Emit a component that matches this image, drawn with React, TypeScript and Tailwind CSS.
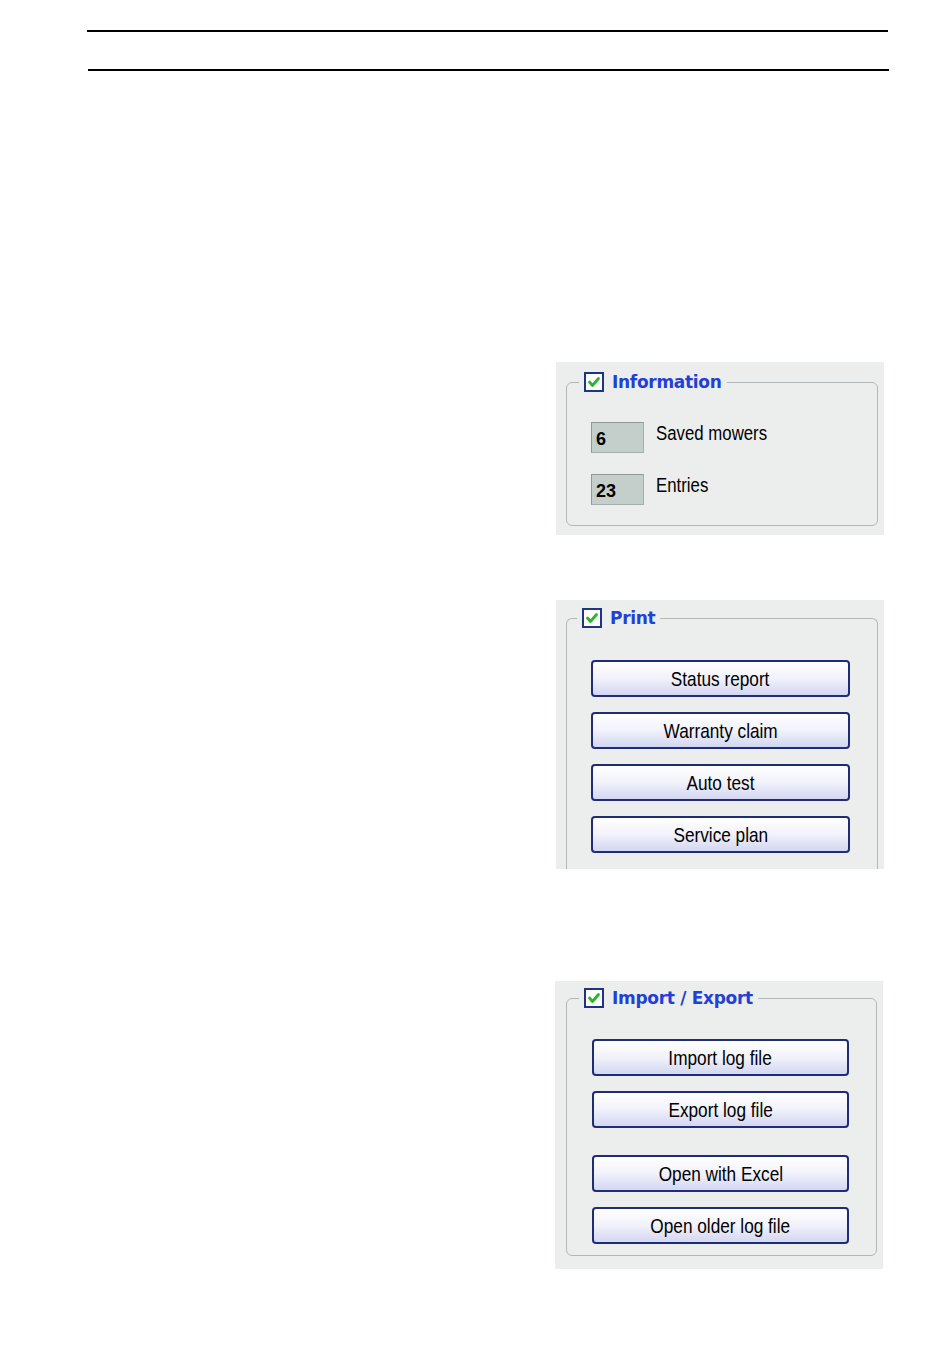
import React from "react";

const sans = { fontFamily: '"Liberation Sans", Arial, sans-serif' };
const head = { fontFamily: '"DejaVu Sans", Verdana, sans-serif' };

function CheckBox() {
  return (
    <span className="w-[20px] h-[20px] border-2 border-[#1f3486] bg-white flex items-center justify-center shrink-0">
      <svg width="14" height="14" viewBox="0 0 14 14">
        <path d="M2.5 7 L5.5 10.5 L11.5 3.5" fill="none" stroke="#2cb52c" strokeWidth="2.8" strokeLinecap="round" strokeLinejoin="round" />
      </svg>
    </span>
  );
}

function Legend({ title, className = "ml-[12px]" }: { title: string; className?: string }) {
  return (
    <legend className={`px-[5px] ${className}`}>
      <span className="flex items-center gap-[8px]">
        <CheckBox />
        <span className="text-[17px] font-bold text-[#2340d6] tracking-[-0.3px] leading-[20px]" style={head}>
          {title}
        </span>
      </span>
    </legend>
  );
}

function WinButton({ label, className = "w-[259px]" }: { label: string; className?: string }) {
  return (
    <button
      className={`h-[37px] border-2 border-[#1f2c78] rounded-[4px] bg-gradient-to-b from-white via-[#f1f2fb] to-[#d3d7f1] text-black flex items-center justify-center ${className}`}
      style={sans}
    >
      <span className="text-[21px] leading-[24px] scale-x-[0.82] whitespace-nowrap">{label}</span>
    </button>
  );
}

function Stat({ value, label }: { value: string; label: string }) {
  return (
    <div className="flex items-start gap-[12px]">
      <div
        className="w-[53px] h-[31px] bg-[#c4cecb] border border-[#a3adab] border-t-[#8f9997] border-l-[#8f9997] pl-[4px] pt-[5px] text-[18px] font-bold text-black leading-[22px]"
        style={sans}
      >
        {value}
      </div>
      <span
        className="text-[20px] text-black leading-[22px] scale-x-[0.84] origin-left whitespace-nowrap"
        style={sans}
      >
        {label}
      </span>
    </div>
  );
}

export default function App() {
  return (
    <div className="w-[950px] h-[1370px] bg-white pt-[30px]">
      <div className="ml-[87px] w-[801px] h-[2px] bg-black" />
      <div className="ml-[88px] mt-[37px] w-[801px] h-[2px] bg-black" />

      {/* Information */}
      <div className="ml-[556px] mt-[291px] w-[328px] h-[173px] bg-[#eceeee] pt-[10px]">
        <fieldset className="ml-[10px] mr-[6px] h-[154px] border border-[#b3b8bb] rounded-[6px]">
          <Legend title="Information" />
          <div className="flex flex-col gap-[21px] pl-[24px] pt-[30px]">
            <Stat value="6" label="Saved mowers" />
            <Stat value="23" label="Entries" />
          </div>
        </fieldset>
      </div>

      {/* Print */}
      <div className="ml-[556px] mt-[65px] w-[328px] h-[269px] bg-[#eceeee] pt-[8px]">
        <fieldset className="ml-[10px] mr-[6px] h-[261px] border border-b-0 border-[#b3b8bb] rounded-t-[6px]">
          <Legend title="Print" className="ml-[10px]" />
          <div className="flex flex-col gap-[15px] pl-[24px] pt-[32px]">
            <WinButton label="Status report" />
            <WinButton label="Warranty claim" />
            <WinButton label="Auto test" />
            <WinButton label="Service plan" />
          </div>
        </fieldset>
      </div>

      {/* Import / Export */}
      <div className="ml-[555px] mt-[112px] w-[328px] h-[288px] bg-[#eceeee] pt-[7px]">
        <fieldset className="ml-[11px] mr-[6px] h-[268px] border border-[#b3b8bb] rounded-[6px]">
          <Legend title="Import / Export" />
          <div className="flex flex-col gap-[15px] pl-[25px] pt-[31px]">
            <WinButton label="Import log file" className="w-[257px]" />
            <WinButton label="Export log file" className="w-[257px]" />
            <WinButton label="Open with Excel" className="w-[257px] mt-[12px]" />
            <WinButton label="Open older log file" className="w-[257px]" />
          </div>
        </fieldset>
      </div>
    </div>
  );
}
